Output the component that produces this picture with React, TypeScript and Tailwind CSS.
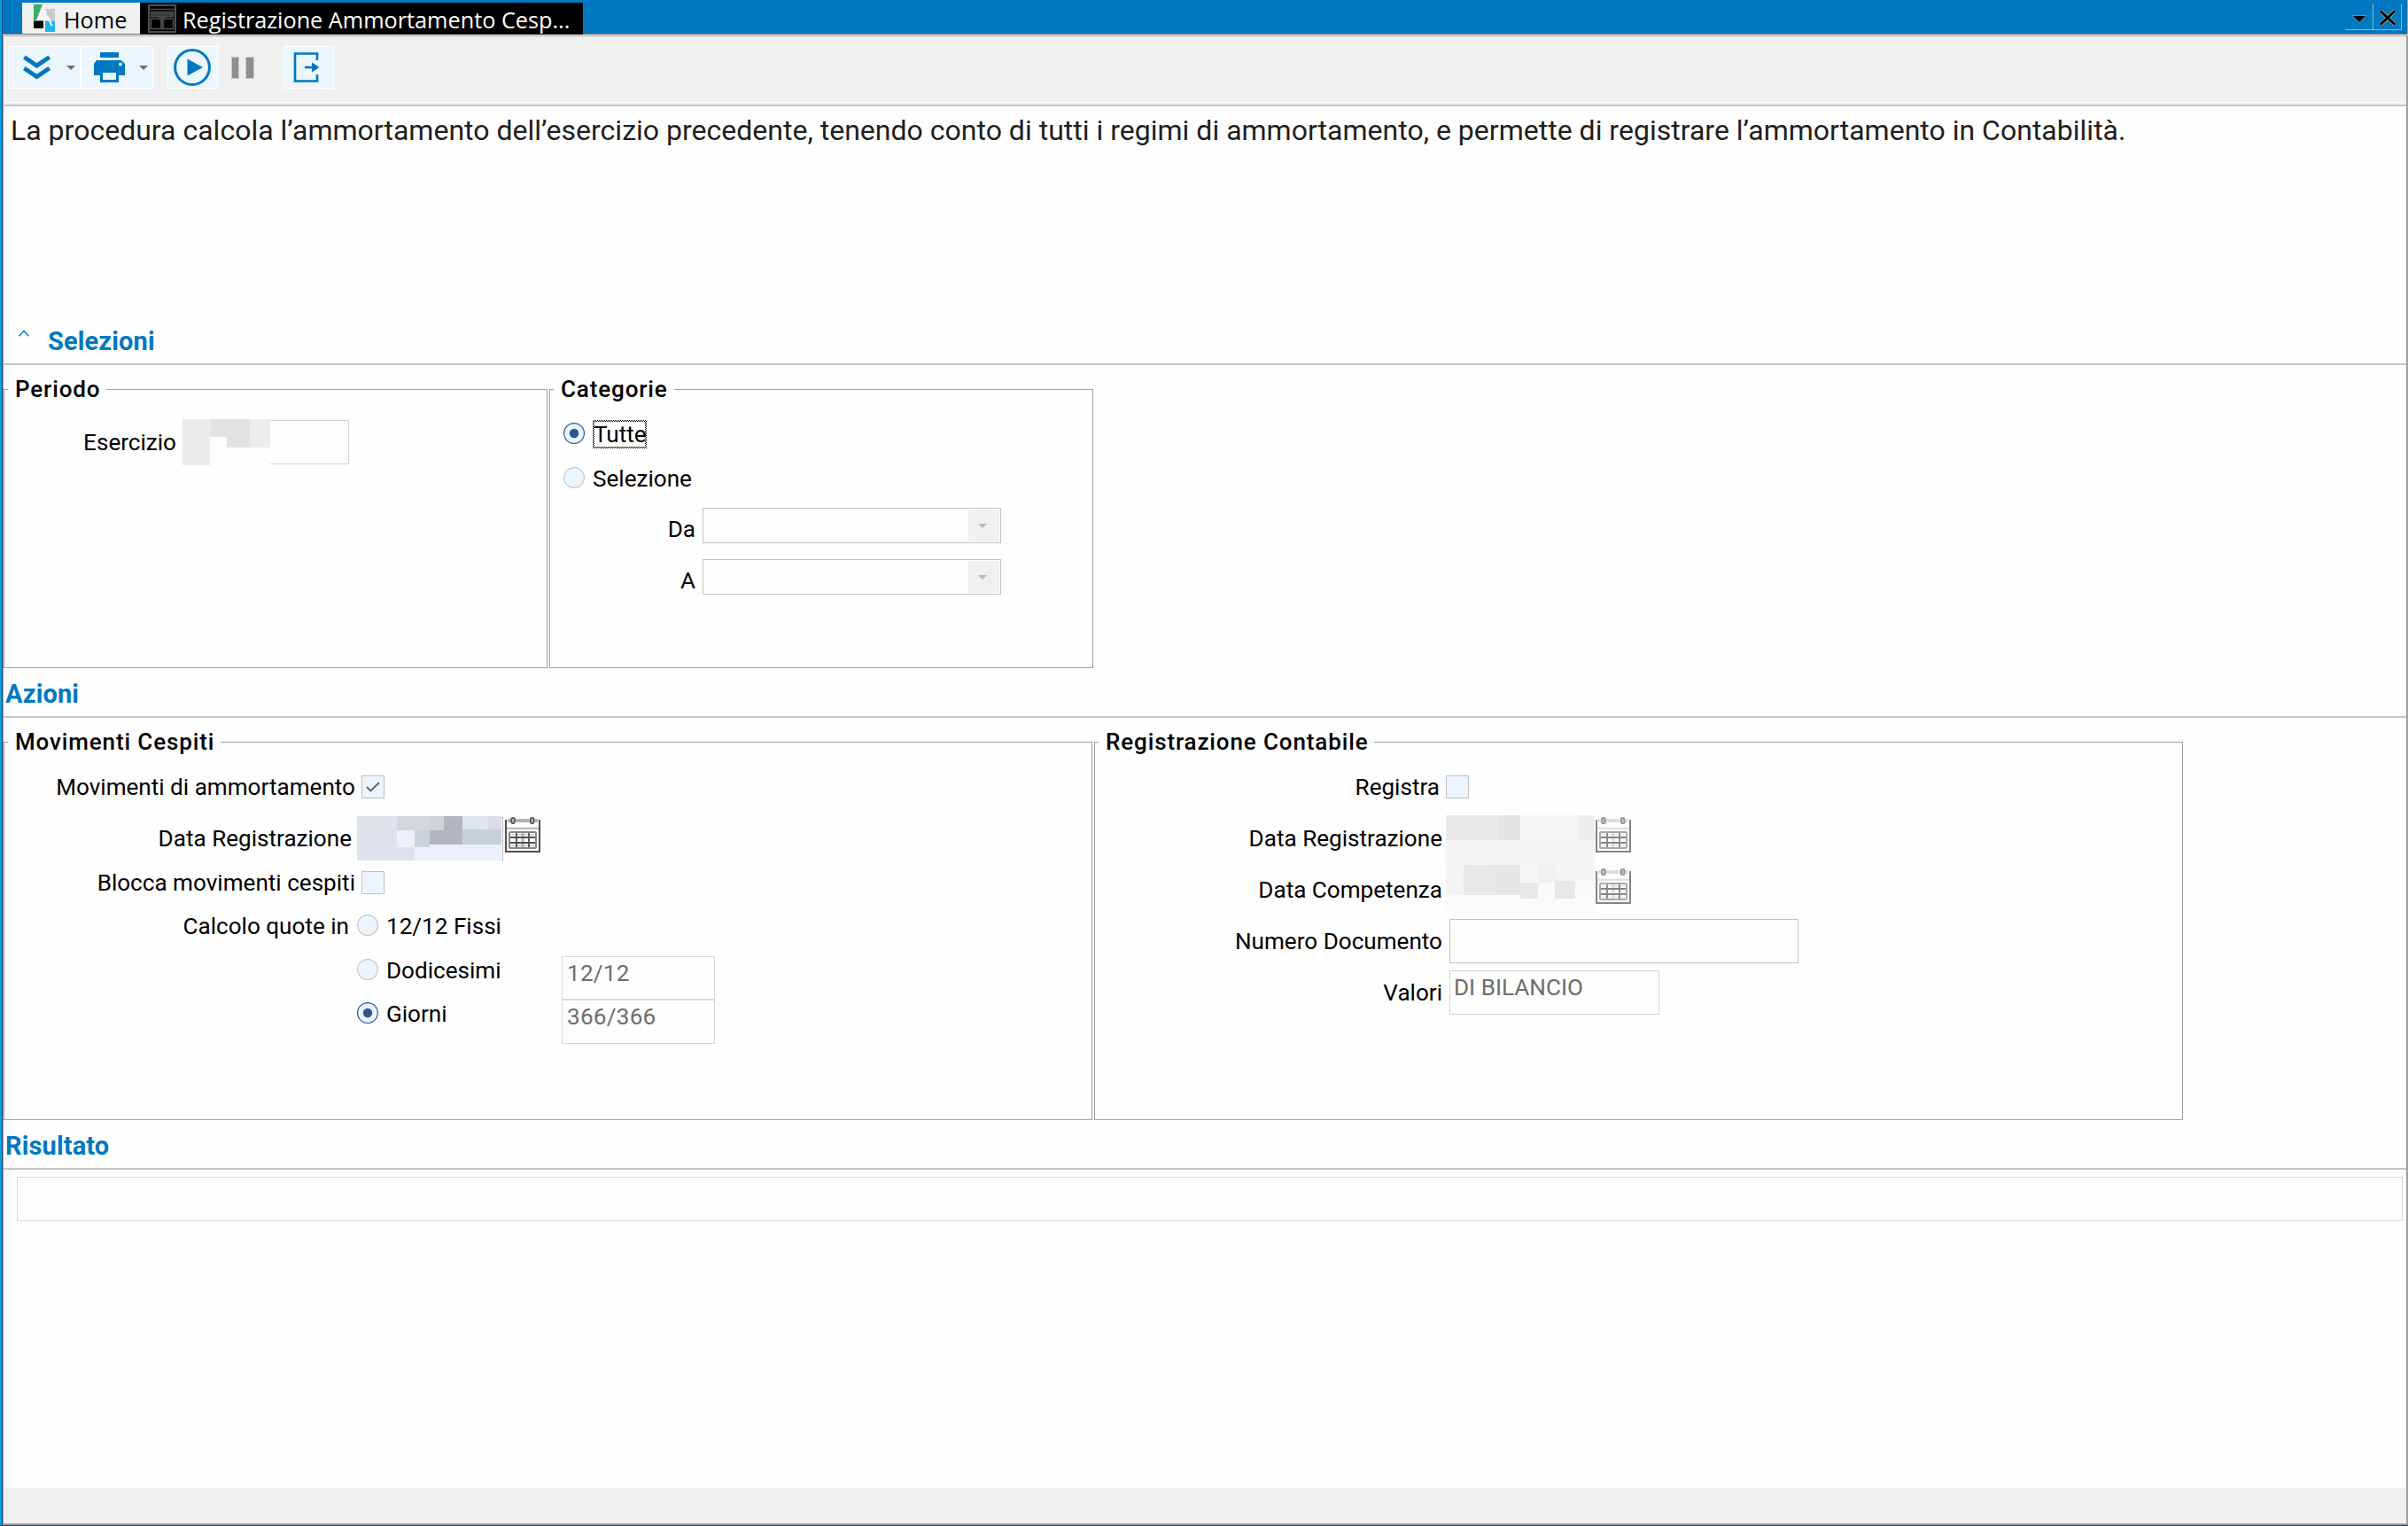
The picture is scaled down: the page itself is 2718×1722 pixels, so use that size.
import type { ReactNode } from "react";

type Block = [x: number, y: number, w: number, h: number, fill: string];

const yearBlocks: Block[] = [
  [0, 0, 99, 52, "#fdfdfd"],
  [0, 0, 31, 52, "#ebebe9"],
  [31, 0, 45, 20, "#e3e3e3"],
  [50, 0, 26, 32, "#e3e3e3"],
  [76, 0, 23, 32, "#ececec"],
];

const dateBlocks: Block[] = [
  [0, 0, 163, 50, "#dee2ea"],
  [0, 0, 29, 16, "#dfe2e5"],
  [45, 0, 37, 16, "#d3d8db"],
  [82, 0, 16, 16, "#cfd4d6"],
  [98, 0, 21, 32, "#b2b6c0"],
  [119, 0, 29, 15, "#e0e6ee"],
  [148, 0, 15, 15, "#d8dee1"],
  [45, 16, 20, 19, "#ebf0fa"],
  [65, 16, 17, 19, "#ccd2da"],
  [82, 16, 16, 16, "#b2b6c0"],
  [119, 15, 44, 17, "#c9cfd7"],
  [65, 35, 17, 15, "#ebf0fa"],
  [82, 32, 37, 18, "#ebf0fa"],
  [119, 32, 44, 18, "#e9f0fa"],
];

const accountingBlocks: Block[] = [
  [0, 0, 168, 112, "#f5f5f5"],
  [0, 0, 60, 28, "#e9e9e9"],
  [60, 0, 24, 28, "#e4e4e4"],
  [84, 0, 65, 28, "#f6f6f6"],
  [149, 0, 19, 28, "#eeeeee"],
  [149, 28, 19, 28, "#f4f4f4"],
  [0, 56, 20, 34, "#f4f4f2"],
  [20, 56, 34, 34, "#e8e8e8"],
  [54, 56, 30, 34, "#e6e8e7"],
  [84, 56, 20, 20, "#f7f7f7"],
  [104, 56, 19, 20, "#f1f1f1"],
  [123, 56, 45, 18, "#f4f4f4"],
  [84, 76, 20, 18, "#e9e9e8"],
  [104, 76, 19, 18, "#fafafa"],
  [123, 74, 23, 20, "#e6e9e7"],
  [146, 74, 22, 20, "#f9f9f9"],
  [0, 90, 84, 22, "#fbfbfb"],
  [84, 94, 84, 18, "#fbfbfb"],
];

function Redacted({ blocks, width, height }: { blocks: Block[]; width: number; height: number }) {
  return (
    <svg width={width} height={height} shapeRendering="crispEdges" className="shrink-0">
      {blocks.map(([x, y, w, h, fill], i) => (
        <rect key={i} x={x} y={y} width={w} height={h} fill={fill} />
      ))}
    </svg>
  );
}

function CalendarIcon({ disabled = false }: { disabled?: boolean }) {
  const dark = disabled ? "#858585" : "#4f4f4f";
  const mid = disabled ? "#a9a9a9" : "#858585";
  const light = disabled ? "#dedede" : "#b4b4b4";
  const ring = disabled ? "#949494" : "#5c5c5c";
  return (
    <svg width="40" height="40" viewBox="0 0 40 40" fill="none" className="shrink-0">
      <path d="M3 2H37V6H3Z" fill={light} />
      <path d="M1 3V39H39V3" stroke={dark} strokeWidth="2" />
      <path d="M2 12.8H38" stroke={light} strokeWidth="2" />
      <rect x="7.3" y="1" width="3.4" height="6" rx="1.2" fill="#ddd" stroke={ring} strokeWidth="2" />
      <rect x="29" y="1" width="3.4" height="6" rx="1.2" fill="#ddd" stroke={ring} strokeWidth="2" />
      <rect x="5" y="17" width="30" height="18" rx="1.5" stroke={mid} strokeWidth="2" />
      <path d="M7 20H33M7 32.5H33" stroke={light} strokeWidth="1" />
      <path d="M20 18V34" stroke={light} strokeWidth="3.4" />
      <path d="M6 23H34M6 29H34M13 18V34M27 18V34" stroke={dark} strokeWidth="1.8" />
    </svg>
  );
}

function Radio({ checked = false }: { checked?: boolean }) {
  return (
    <svg width="24" height="24" viewBox="0 0 24 24" className="shrink-0">
      <circle cx="12" cy="12" r="11.4" fill="#ecf4fd" stroke={checked ? "#2b579a" : "#c6c6c6"} strokeWidth="1.2" />
      {checked && <circle cx="12" cy="12" r="5.2" fill="#2b579a" />}
    </svg>
  );
}

function Checkbox({ checked = false }: { checked?: boolean }) {
  return (
    <span className="flex h-[26px] w-[26px] shrink-0 items-center justify-center border border-[#c0c0c0] bg-[#ecf4fd]">
      {checked && (
        <svg width="16" height="12" viewBox="0 0 16 12" fill="none">
          <path d="M1 6L5.5 10.5L15 1" stroke="#666" strokeWidth="1.9" />
        </svg>
      )}
    </span>
  );
}

function Combo() {
  return (
    <div className="flex h-10 w-[337px] justify-end border border-[#c3c3c3] p-px">
      <span className="flex w-[35px] items-center justify-center bg-[#f0f0f0] pr-1">
        <svg width="10" height="5" viewBox="0 0 10 5">
          <path d="M0 0H10L5 5Z" fill="#b9b9b9" />
        </svg>
      </span>
    </div>
  );
}

function SectionTitle({ children }: { children: ReactNode }) {
  return (
    <h2 className="flex h-[52px] items-center border-b-2 border-[#c6c6c6] text-[29px] font-bold tracking-[0.13px] text-[#0078c0]">
      {children}
    </h2>
  );
}

function Panel({ title, className, children }: { title: string; className: string; children: ReactNode }) {
  return (
    <fieldset className={`border border-[#a0a0a0] ${className}`}>
      <legend className="ml-1 h-[31px] pr-[7px] pl-2 text-[26px] leading-[31px] font-medium tracking-[0.87px]">{title}</legend>
      {children}
    </fieldset>
  );
}

function TabBar() {
  return (
    <div className="flex h-[38px] items-start bg-[#0078c0] pt-[3px] pl-[22px]">
      <div className="flex h-[35px] w-[133px] items-start bg-[#f0f0f0] pl-[13px] text-[25.25px] text-black">
        <svg width="24" height="31" viewBox="0 0 24 31" className="mt-0.5">
          <path d="M0 0H10L3 18H0Z" fill="#3dae68" />
          <path d="M13 5H24V18H19L16 13H13Z" fill="#c9c9c9" />
          <path d="M0 18.5H11V27H0Z" fill="#000" />
          <path d="M13 18.5H24V31H13Z" fill="#22b5ea" />
          <path d="M10 4L5.5 15.5H14.5M13.5 7V17.5M16 14L20.5 24" stroke="#fff" strokeWidth="2" fill="none" />
        </svg>
        <span className="pt-[3px] pl-[10px]">Home</span>
      </div>
      <div className="relative flex h-9 w-[500px] items-start bg-black pl-[9px] text-[25.25px] text-white">
        <svg width="32" height="32" viewBox="0 0 32 32" fill="none" stroke="#4f4f4f" className="mt-0.5">
          <rect x="1" y="1" width="30" height="30" strokeWidth="2" />
          <path d="M2 5.5H30" strokeWidth="1.4" />
          <rect x="3.5" y="8.5" width="25" height="5" fill="#333" strokeWidth="1.4" />
          <path d="M3 11H29" strokeWidth="1" />
          <rect x="3.5" y="16" width="25" height="11.5" strokeWidth="1.6" />
          <path d="M12 15.5H20M16 15V28" stroke="#444" strokeWidth="4" />
        </svg>
        <span className="pt-[3px] pl-[7px]">Registrazione Ammortamento Cesp...</span>
      </div>
      <div className="mt-px mr-1.5 ml-auto flex h-[30px] border-b border-[#7cbbe2]">
        <span className="flex w-8 justify-center border-r border-[#7cbbe2] pt-[13px]">
          <svg width="18" height="9" viewBox="0 0 18 9">
            <path d="M1 0.5H17L9 8.5Z" fill="#000" stroke="#9a9a9a" strokeWidth="0.8" />
          </svg>
        </span>
        <span className="flex w-8 justify-center border-r border-[#7cbbe2] pt-[7px]">
          <svg width="20" height="18" viewBox="0 0 20 18">
            <path d="M2 1.5L18 16.5M18 1.5L2 16.5" stroke="#a8a8a8" strokeWidth="4.4" />
            <path d="M2 1.5L18 16.5M18 1.5L2 16.5" stroke="#000" strokeWidth="3" />
          </svg>
        </span>
      </div>
    </div>
  );
}

function DropArrow() {
  return (
    <svg width="10" height="5" viewBox="0 0 10 5">
      <path d="M0 0H10L5 5Z" fill="#6d6d6d" />
    </svg>
  );
}

function Toolbar() {
  return (
    <div className="h-[79px] border-b-2 border-[#c6c6c6] bg-[#f0f0f0] pb-0.5 pl-0.5">
      <div className="flex h-[75px] items-start border-b border-l border-white pt-[11px] pl-0.5">
        <button className="flex h-12 w-[82px] items-center border border-white bg-[#ebf6fd] pl-4">
          <svg width="32" height="28" viewBox="0 0 32 28" fill="none" stroke="#0078c0" strokeWidth="4.8">
            <path d="M1.3 2.5L15.5 12L29.7 2.5M1.3 15L15.5 24.5L29.7 15" />
          </svg>
          <span className="pl-[17px]">
            <DropArrow />
          </span>
        </button>
        <button className="flex h-12 w-[82px] items-center border border-white bg-[#ebf6fd] pl-[14px]">
          <svg width="36" height="34" viewBox="0 0 36 34">
            <path d="M7 0H28V6H7Z" fill="#0078c0" />
            <path d="M3 9H31L35 13V26H28V21H7V26H0V13Z" fill="#0078c0" />
            <path d="M8.5 21.5H26.5V32.5H8.5Z" fill="#ebf6fd" stroke="#0078c0" strokeWidth="3" />
            <circle cx="30" cy="13.5" r="2" fill="#ebf6fd" />
          </svg>
          <span className="pl-[15px]">
            <DropArrow />
          </span>
        </button>
        <button className="ml-4 flex h-12 w-[57px] items-center border border-white bg-[#ebf6fd] pl-[5px]">
          <svg width="44" height="44" viewBox="0 0 44 44">
            <circle cx="22" cy="22" r="19.4" fill="none" stroke="#0078c0" strokeWidth="3" />
            <path d="M16.5 12.5L34 22L16.5 31.5Z" fill="#0078c0" />
          </svg>
        </button>
        <span className="ml-[15px] flex h-12 w-[26px] items-center justify-between">
          <span className="h-[25px] w-[9px] border border-[#c8c8c8] bg-[#8f8f8f]" />
          <span className="h-[25px] w-[10px] border border-[#c8c8c8] bg-[#8f8f8f]" />
        </span>
        <button className="ml-[33px] flex h-12 w-[57px] items-center border border-white bg-[#ebf6fd] pl-[10px]">
          <svg width="31" height="34" viewBox="0 0 31 34" fill="none">
            <path d="M27 9V1.5H2V32.5H27V25" stroke="#0078c0" strokeWidth="2.6" />
            <path d="M13 17H24" stroke="#0078c0" strokeWidth="2.6" />
            <path d="M21 11.5L29.5 17L21 22.5Z" fill="#0078c0" />
          </svg>
        </button>
      </div>
    </div>
  );
}

function App() {
  return (
    <div className="flex h-[1722px] w-[2718px] flex-col border-b border-[#26395c] bg-[#a0a0a0] font-['Roboto',sans-serif] text-[26.1px] leading-8 text-black">
      <div className="flex min-h-0 flex-1">
        <div className="w-0.5 bg-[#00a2ed]" />
        <div className="w-px bg-[#1d4a68]" />
        <div className="flex min-w-0 flex-1 flex-col">
          <div className="mr-px h-[39px] bg-[#6b6b6b] font-['Open_Sans',sans-serif]">
            <TabBar />
          </div>
          <div className="h-px bg-white" />
          <div className="mt-px mr-0.5 mb-0.5 ml-px flex flex-1 flex-col bg-[#fefefe]">
            <Toolbar />

            <p className="h-60 pl-2 text-[32px] leading-[54px] tracking-[0.01px] whitespace-nowrap text-[#1f1f1f]">
              La procedura calcola l’ammortamento dell’esercizio precedente, tenendo conto di tutti i regimi di
              ammortamento, e permette di registrare l’ammortamento in Contabilità.
            </p>

            <SectionTitle>
              <svg width="12" height="8" viewBox="0 0 12 8" fill="none" className="mt-3 ml-[17px] self-start">
                <path d="M0.7 7.3L6 1.2L11.3 7.3" stroke="#0078c0" strokeWidth="1.3" />
              </svg>
              <span className="ml-[21px]">Selezioni</span>
            </SectionTitle>

            <div className="mt-3 flex gap-0.5">
              <Panel title="Periodo" className="h-[330px] w-[614px]">
                <div className="mt-[18px] flex h-[52px] items-center">
                  <label className="w-[194px] text-right">Esercizio</label>
                  <div className="ml-[7px] flex items-center">
                    <Redacted blocks={yearBlocks} width={99} height={52} />
                    <span className="h-[50px] w-[89px] border border-l-0 border-[#d4d4d4]" />
                  </div>
                </div>
              </Panel>
              <Panel title="Categorie" className="h-[330px] w-[614px]">
                <label className="mt-[19px] ml-[15px] flex h-8 items-center">
                  <span className="mb-0.5">
                    <Radio checked />
                  </span>
                  {/* focus ring */}
                  <span className="ml-[9px] h-8 w-[61px] bg-[repeating-conic-gradient(#000_0_25%,#fff_0_50%)] bg-[length:2px_2px] p-0.5">
                    <span className="block h-7 w-[57px] bg-white leading-7">
                      <span className="-ml-px">Tutte</span>
                    </span>
                  </span>
                </label>
                <label className="mt-[18px] ml-[15px] flex h-8 items-center">
                  <span className="mb-0.5">
                    <Radio />
                  </span>
                  <span className="ml-[9px]">Selezione</span>
                </label>
                <div className="mt-[17px] flex h-10">
                  <label className="w-[164px] pt-2 text-right">Da</label>
                  <span className="ml-2">
                    <Combo />
                  </span>
                </div>
                <div className="mt-[18px] flex h-10">
                  <label className="w-[164px] pt-2 text-right">A</label>
                  <span className="ml-2">
                    <Combo />
                  </span>
                </div>
              </Panel>
            </div>

            <div className="mt-1">
              <SectionTitle>
                <span className="ml-0.5">Azioni</span>
              </SectionTitle>
            </div>

            <div className="mt-3 flex gap-0.5">
              <Panel title="Movimenti Cespiti" className="h-[442px] w-[1229px]">
                <div className="mt-[22px] flex h-[26px] items-center">
                  <label className="mr-[7px] w-[396px] text-right">Movimenti di ammortamento</label>
                  <Checkbox checked />
                </div>
                <div className="mt-5 flex h-[50px] items-center">
                  <label className="mr-1.5 w-[392px] text-right">Data Registrazione</label>
                  <Redacted blocks={dateBlocks} width={163} height={50} />
                  <span className="mr-0.5 h-[49px] w-0.5 self-end border border-l-0 border-[#bdbdbd]" />
                  <span className="mt-px self-start">
                    <CalendarIcon />
                  </span>
                </div>
                <div className="mt-3 flex h-[26px] items-center">
                  <label className="mr-[7px] w-[396px] text-right">Blocca movimenti cespiti</label>
                  <Checkbox />
                </div>
                <div className="mt-[23px] flex h-6 items-center">
                  <span className="mr-[9px] w-[389px] pt-0.5 text-right">Calcolo quote in</span>
                  <Radio />
                  <label className="pt-0.5 pl-[9px]">12/12 Fissi</label>
                </div>
                <div className="mt-[23px] ml-[398px] flex">
                  <div className="flex w-[231px] flex-col gap-[25px] pt-[3px]">
                    <div className="flex h-6 items-center">
                      <Radio />
                      <label className="pt-0.5 pl-[9px]">Dodicesimi</label>
                    </div>
                    <div className="flex h-6 items-center">
                      <Radio checked />
                      <label className="pt-px pl-[9px]">Giorni</label>
                    </div>
                  </div>
                  <div className="w-[173px] leading-9 tracking-[0.25px] text-[#6d6d6d]">
                    <div className="h-[49px] border border-[#d9d9d9] pl-[5px]">12/12</div>
                    <div className="h-[50px] border border-[#d9d9d9] pl-[5px]">366/366</div>
                  </div>
                </div>
              </Panel>

              <Panel title="Registrazione Contabile" className="h-[442px] w-[1229px]">
                <div className="mt-[22px] flex h-[26px] items-center">
                  <label className="mr-[7px] w-[389px] text-right">Registra</label>
                  <Checkbox />
                </div>
                <div className="mt-[19px] flex h-28">
                  <div className="mr-1 flex w-[392px] flex-col text-right">
                    <label className="h-[52px] leading-[52px]">Data Registrazione</label>
                    <label className="h-[60px] leading-[64px]">Data Competenza</label>
                  </div>
                  <Redacted blocks={accountingBlocks} width={168} height={112} />
                  <div className="ml-px flex flex-col gap-[18px] pt-0.5">
                    <CalendarIcon disabled />
                    <CalendarIcon disabled />
                  </div>
                </div>
                <div className="mt-[5px] flex h-[50px] items-center">
                  <label className="mr-2 w-[392px] text-right">Numero Documento</label>
                  <span className="h-[50px] w-[394px] border border-[#c3c3c3]" />
                </div>
                <div className="mt-2 flex h-[50px] items-center">
                  <label className="mr-2 w-[392px] text-right">Valori</label>
                  <span className="h-[50px] w-[237px] border border-[#d4d4d4] pl-1 leading-9 text-[#6d6d6d]">
                    DI BILANCIO
                  </span>
                </div>
              </Panel>
            </div>

            <div className="mt-1">
              <SectionTitle>
                <span className="ml-0.5">Risultato</span>
              </SectionTitle>
            </div>
            <div className="mt-2 mr-1 ml-[15px] h-[50px] border border-[#d9d9d9]" />

            <div className="mt-auto h-10 bg-[#f0f0f0]" />
          </div>
        </div>
      </div>
    </div>
  );
}

export default App;
